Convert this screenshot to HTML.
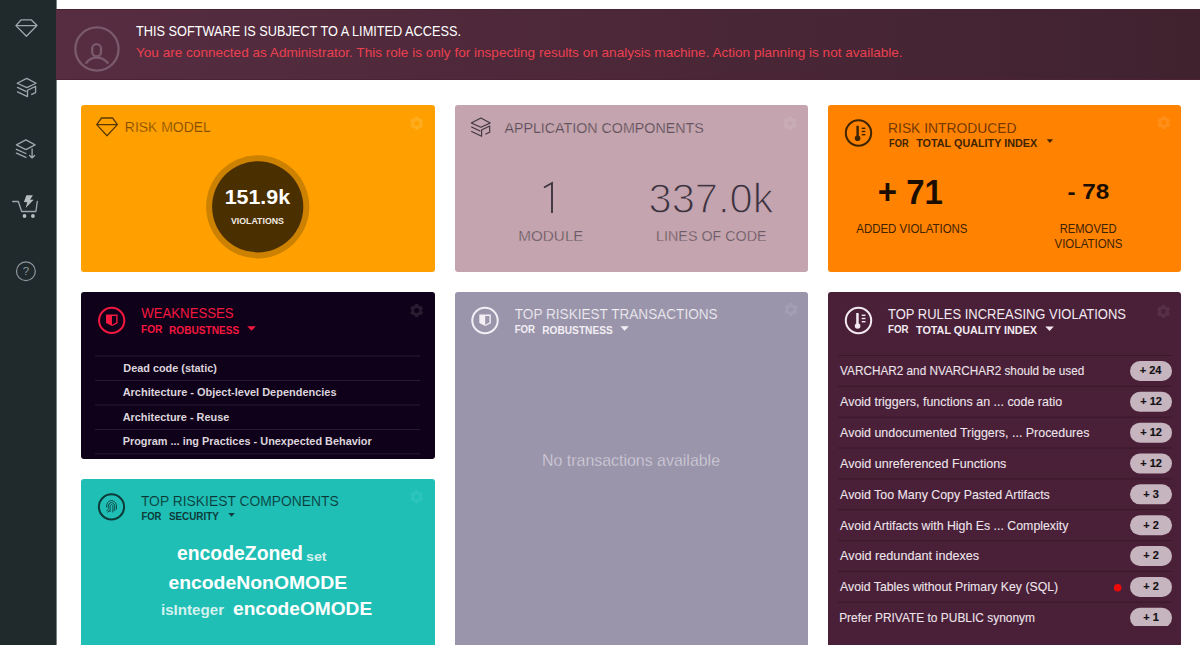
<!DOCTYPE html>
<html><head><meta charset="utf-8">
<style>
*{margin:0;padding:0;box-sizing:border-box}
html,body{width:1200px;height:645px;overflow:hidden;background:#fff;font-family:"Liberation Sans",sans-serif}
.abs{position:absolute}
#side{position:absolute;left:0;top:0;width:56px;height:645px;background:#20292c}
#sideline{position:absolute;left:56px;top:0;width:1px;height:645px;background:#7a8184}
#banner{position:absolute;left:56px;top:9px;width:1144px;height:71px;background:linear-gradient(90deg,#572d41,#40222f);border-top:1px solid #4a2334;border-bottom:1px solid #4a2334}
.card{position:absolute;border-radius:3px;overflow:hidden}
#ov{position:absolute;left:0;top:0}
</style></head><body>
<div id="side"></div>
<div id="sideline"></div>
<div id="banner"></div>

<div class="card" style="left:81px;top:105px;width:354px;height:167px;background:#ffa000"></div>
<div class="card" style="left:455px;top:105px;width:353px;height:167px;background:#c4a4ae"></div>
<div class="card" style="left:828px;top:105px;width:353px;height:167px;background:#ff8300"></div>
<div class="card" style="left:81px;top:292px;width:354px;height:167px;background:#10011a"></div>
<div class="card" style="left:81px;top:479px;width:354px;height:180px;background:#1fbfb5"></div>
<div class="card" style="left:455px;top:292px;width:353px;height:370px;background:#9a95ab"></div>
<div class="card" style="left:828px;top:292px;width:353px;height:370px;background:#4a2039"></div>

<svg id="ov" width="1200" height="645" viewBox="0 0 1200 645" font-family="Liberation Sans, sans-serif">
<defs>
  <clipPath id="rulesclip"><rect x="828" y="292" width="353" height="334"/></clipPath>
  <g id="gear">
    <path d="M-2.35 -4.41 L-1.51 -6.53 L1.51 -6.53 L2.35 -4.41 L2.65 -4.24 L4.90 -4.57 L6.41 -1.96 L5.00 -0.17 L5.00 0.17 L6.41 1.96 L4.90 4.57 L2.65 4.24 L2.35 4.41 L1.51 6.53 L-1.51 6.53 L-2.35 4.41 L-2.65 4.24 L-4.90 4.57 L-6.41 1.96 L-5.00 0.17 L-5.00 -0.17 L-6.41 -1.96 L-4.90 -4.57 L-2.65 -4.24 Z M0 -2.5 A2.5 2.5 0 1 0 0 2.5 A2.5 2.5 0 1 0 0 -2.5 Z" fill-rule="evenodd"/>
  </g>
</defs>

<!-- sidebar icons -->
<g fill="none" stroke="#9aa7ad" stroke-width="1.35" stroke-linejoin="round" stroke-linecap="round">
  <path d="M21.2 19.8 H31.2 L37 25.6 L26.4 36.3 L15.9 25.6 Z M15.9 25.6 H37"/>
  <path d="M26.80 78.40 L36.10 83.25 L26.80 87.65 L17.20 83.25 Z M17.50 87.45 L25.90 91.45 M17.50 91.85 L27.50 96.55 V90.25 L35.60 86.35 V92.55 L31.70 94.45"/>
  <path d="M25.9 139.8 L35.1 144.8 L25.9 149.6 L16.4 144.8 Z M16.4 149.3 L25.9 153.5 M16.4 153.2 L25.9 157.4 M32.1 149 L32.1 157.9 M29.6 155.4 L32.1 157.9 L34.6 155.4"/>
  <path d="M12.7 201.5 H18.3 L21.7 211.5 H35.9 L37.3 201.5"/>
  <circle cx="25.9" cy="271.3" r="9.4" stroke="#8d999f" stroke-width="1.2"/>
</g>
<g fill="#b5bdc1">
  <circle cx="24.5" cy="216" r="1.9"/>
  <circle cx="32.9" cy="216" r="1.9"/>
  <path d="M26.4 195.3 L32.9 195.3 L30.1 199.8 L33.7 199.8 L25.6 207.9 L27.3 202.3 L23.9 202 Z"/>
</g>
<text x="22.7" y="275.4" font-size="11.5" fill="#8d999f">?</text>

<!-- banner icon -->
<g fill="none" stroke="#7b5a6c" stroke-width="2.3">
  <circle cx="96.95" cy="49" r="21.6"/>
  <rect x="92.2" y="44.2" width="8.8" height="12.2" rx="4.4"/>
  <path d="M86.2 62.8 C88.5 59.5 92.5 57.6 96.8 57.6 C101.1 57.6 105.1 59.5 107.6 62.8" stroke-linecap="round"/>
</g>

<!-- card1 -->
<path d="M101.5 118 H112.6 L117.4 124.6 L107 135.7 L96.7 124.6 Z M96.7 124.6 H117.4" fill="none" stroke="#5a3a00" stroke-width="1.3" stroke-linejoin="round"/>
<circle cx="257.7" cy="206.8" r="51.6" fill="#cc8100"/>
<circle cx="257.7" cy="206.8" r="45.6" fill="#4a2f00"/>
<use href="#gear" x="416.7" y="123.3" fill="#ffad1f"/>

<!-- card2 -->
<g fill="none" stroke="#3e3641" stroke-width="1.15" stroke-linejoin="round" stroke-linecap="round">
  <path d="M480.9 118.05 L490.2 122.9 L480.9 127.3 L471.3 122.9 Z M471.6 127.1 L480 131.1 M471.6 131.5 L481.6 136.2 V129.9 L489.7 126 V132.2 L485.8 134.1"/>
</g>
<path d="M544 187.5 L552 183 V213" fill="none" stroke="#3e3641" stroke-width="1.9" stroke-linejoin="miter"/>
<use href="#gear" x="790" y="123.3" fill="#c9adb6"/>

<!-- card3 -->
<circle cx="858.5" cy="133" r="12.7" fill="none" stroke="#3f2400" stroke-width="2"/>
<g fill="#3f2400">
  <rect x="856.4" y="125.8" width="2.4" height="11.5"/>
  <circle cx="857.6" cy="138.2" r="2.8"/>
  <rect x="861.7" y="127.6" width="3.6" height="1.4"/>
  <rect x="861.7" y="130.8" width="3.6" height="1.4"/>
  <rect x="861.7" y="134" width="3.6" height="1.4"/>
  <path d="M1046.7 139.3 H1053.1 L1049.9 142.9 Z"/>
</g>
<use href="#gear" x="1163.8" y="122.6" fill="#ff8e1a"/>

<!-- weaknesses -->
<circle cx="111.7" cy="320.4" r="12.6" fill="none" stroke="#f2183f" stroke-width="2"/>
<path d="M106 314.5 H112 V326 L106 323 Z" fill="#f2183f"/>
<path d="M112 315.2 H116.9 V322.8 L112 325.5" fill="none" stroke="#f2183f" stroke-width="1.4"/>
<path d="M247.2 326.3 H255.9 L251.55 330.8 Z" fill="#f2183f"/>
<use href="#gear" x="416.6" y="310.5" fill="#2a1b30"/>
<g fill="#2a1a2f">
  <rect x="95" y="355.5" width="325" height="1"/>
  <rect x="95" y="380" width="325" height="1"/>
  <rect x="95" y="404.5" width="325" height="1"/>
  <rect x="95" y="429" width="325" height="1"/>
  <rect x="95" y="453.3" width="325" height="1"/>
</g>

<!-- teal -->
<circle cx="111.5" cy="506.9" r="12.6" fill="none" stroke="#0d3b3a" stroke-width="2"/>
<g fill="none" stroke="#0d3b3a" stroke-width="0.9" stroke-linecap="round">
  <path d="M106.5 507 C106.5 503 108.5 500.6 111.5 500.6 C114.5 500.6 116.5 503 116.5 507 V509"/>
  <path d="M108.3 508 V506.5 C108.3 504.3 109.6 502.6 111.5 502.6 C113.4 502.6 114.7 504.3 114.7 506.5 V510.5"/>
  <path d="M110.1 511.5 V506.5 C110.1 505.4 110.7 504.6 111.5 504.6 C112.3 504.6 112.9 505.4 112.9 506.5 V512"/>
  <path d="M106.8 510.5 L108.3 509.5 M107.5 512.2 L109.5 510.8"/>
</g>
<use href="#gear" x="416.7" y="496.7" fill="#2cc4bb"/>
<path d="M228.3 513 H234.8 L231.55 516.7 Z" fill="#0d3b3a"/>

<!-- transactions -->
<circle cx="485" cy="320.5" r="12.7" fill="none" stroke="#f3eff5" stroke-width="2"/>
<path d="M479.3 314.6 H485.2 V326 L479.3 323 Z" fill="#f3eff5"/>
<path d="M485.2 315.3 H490.1 V322.8 L485.2 325.5" fill="none" stroke="#f3eff5" stroke-width="1.4"/>
<path d="M620.4 326.3 H628.8 L624.6 330.7 Z" fill="#f3eff5"/>
<use href="#gear" x="790.9" y="309.4" fill="#a39eb3"/>

<!-- rules -->
<circle cx="858.5" cy="320.5" r="12.7" fill="none" stroke="#f2eaf0" stroke-width="2"/>
<g fill="#f2eaf0">
  <rect x="856.2" y="313" width="2.5" height="11.5"/>
  <circle cx="857.6" cy="326" r="2.8"/>
  <rect x="861.7" y="314.6" width="3.8" height="1.4"/>
  <rect x="861.7" y="317.8" width="3.8" height="1.4"/>
  <rect x="861.7" y="321" width="3.8" height="1.4"/>
  <path d="M1045.3 326.6 H1053.8 L1049.55 331 Z"/>
</g>
<use href="#gear" x="1163.5" y="311.5" fill="#573048"/>
<g clip-path="url(#rulesclip)">
<g fill="#3b1729">
  <rect x="838" y="355.00" width="334" height="1"/>
  <rect x="838" y="385.84" width="334" height="1"/>
  <rect x="838" y="416.68" width="334" height="1"/>
  <rect x="838" y="447.52" width="334" height="1"/>
  <rect x="838" y="478.36" width="334" height="1"/>
  <rect x="838" y="509.20" width="334" height="1"/>
  <rect x="838" y="540.04" width="334" height="1"/>
  <rect x="838" y="570.88" width="334" height="1"/>
  <rect x="838" y="601.72" width="334" height="1"/>
</g>
<circle cx="1117.7" cy="587.7" r="3.8" fill="#ee0a0a"/>
<rect x="1130" y="361.00" width="42" height="20" rx="10" fill="#c6b4be"/>
<text x="1139.70" y="374.40" font-size="11" font-weight="700" fill="#121012" stroke="#121012" stroke-width="0.15">+ 24</text>
<rect x="1130" y="391.84" width="42" height="20" rx="10" fill="#c6b4be"/>
<text x="1140.20" y="405.24" font-size="11" font-weight="700" fill="#121012" stroke="#121012" stroke-width="0.15">+ 12</text>
<rect x="1130" y="422.68" width="42" height="20" rx="10" fill="#c6b4be"/>
<text x="1140.20" y="436.08" font-size="11" font-weight="700" fill="#121012" stroke="#121012" stroke-width="0.15">+ 12</text>
<rect x="1130" y="453.52" width="42" height="20" rx="10" fill="#c6b4be"/>
<text x="1140.20" y="466.92" font-size="11" font-weight="700" fill="#121012" stroke="#121012" stroke-width="0.15">+ 12</text>
<rect x="1130" y="484.36" width="42" height="20" rx="10" fill="#c6b4be"/>
<text x="1143.26" y="497.76" font-size="11" font-weight="700" fill="#121012" stroke="#121012" stroke-width="0.15">+ 3</text>
<rect x="1130" y="515.20" width="42" height="20" rx="10" fill="#c6b4be"/>
<text x="1143.26" y="528.60" font-size="11" font-weight="700" fill="#121012" stroke="#121012" stroke-width="0.15">+ 2</text>
<rect x="1130" y="546.04" width="42" height="20" rx="10" fill="#c6b4be"/>
<text x="1143.26" y="559.44" font-size="11" font-weight="700" fill="#121012" stroke="#121012" stroke-width="0.15">+ 2</text>
<rect x="1130" y="576.88" width="42" height="20" rx="10" fill="#c6b4be"/>
<text x="1143.26" y="590.28" font-size="11" font-weight="700" fill="#121012" stroke="#121012" stroke-width="0.15">+ 2</text>
<rect x="1130" y="607.72" width="42" height="20" rx="10" fill="#c6b4be"/>
<text x="1143.26" y="621.12" font-size="11" font-weight="700" fill="#121012" stroke="#121012" stroke-width="0.15">+ 1</text>
</g>

<text x="136.00" y="35.50" font-size="15" font-weight="400" fill="#ffffff" textLength="324.98" lengthAdjust="spacingAndGlyphs">THIS SOFTWARE IS SUBJECT TO A LIMITED ACCESS.</text>
<text x="136.00" y="57.30" font-size="12.9" font-weight="400" fill="#ea4050" textLength="766.61" lengthAdjust="spacingAndGlyphs">You are connected as Administrator. This role is only for inspecting results on analysis machine. Action planning is not available.</text>
<text x="124.84" y="132.40" font-size="14.5" font-weight="400" fill="#4a2f00" stroke="#ffa000" stroke-width="0.45" textLength="86.02" lengthAdjust="spacingAndGlyphs">RISK MODEL</text>
<text x="224.67" y="203.90" font-size="20.8" font-weight="700" fill="#ffffff" textLength="65.48" lengthAdjust="spacingAndGlyphs">151.9k</text>
<text x="231.00" y="223.80" font-size="8.8" font-weight="700" fill="#f2ece4" textLength="52.87" lengthAdjust="spacingAndGlyphs">VIOLATIONS</text>
<text x="504.40" y="132.60" font-size="14.5" font-weight="400" fill="#3a3240" stroke="#c4a4ae" stroke-width="0.45" textLength="199.36" lengthAdjust="spacingAndGlyphs">APPLICATION COMPONENTS</text>
<text x="648.51" y="213.30" font-size="42.2" font-weight="400" fill="#3a3240" stroke="#c4a4ae" stroke-width="1.3" textLength="125.09" lengthAdjust="spacingAndGlyphs">337.0k</text>
<text x="518.32" y="240.60" font-size="15.5" font-weight="400" fill="#4a404b" stroke="#c4a4ae" stroke-width="0.5" textLength="65.22" lengthAdjust="spacingAndGlyphs">MODULE</text>
<text x="656.08" y="240.60" font-size="15.5" font-weight="400" fill="#4a404b" stroke="#c4a4ae" stroke-width="0.5" textLength="110.49" lengthAdjust="spacingAndGlyphs">LINES OF CODE</text>
<text x="888.05" y="132.50" font-size="14.5" font-weight="400" fill="#3a2000" stroke="#ff8300" stroke-width="0.3" textLength="128.40" lengthAdjust="spacingAndGlyphs">RISK INTRODUCED</text>
<text x="889.00" y="146.50" font-size="10.6" font-weight="700" fill="#3f2400" textLength="19.59" lengthAdjust="spacingAndGlyphs">FOR</text>
<text x="916.20" y="146.70" font-size="10.6" font-weight="700" fill="#3f2400" textLength="121.07" lengthAdjust="spacingAndGlyphs">TOTAL QUALITY INDEX</text>
<text x="877.81" y="203.75" font-size="34.9" font-weight="700" fill="#1b0e00" textLength="65.08" lengthAdjust="spacingAndGlyphs">+ 71</text>
<text x="1067.50" y="199.25" font-size="22.7" font-weight="700" fill="#1b0e00" textLength="41.91" lengthAdjust="spacingAndGlyphs">- 78</text>
<text x="856.25" y="232.50" font-size="12.9" font-weight="400" fill="#3f2200" textLength="111.28" lengthAdjust="spacingAndGlyphs">ADDED VIOLATIONS</text>
<text x="1059.63" y="232.50" font-size="12.9" font-weight="400" fill="#3f2200" textLength="56.89" lengthAdjust="spacingAndGlyphs">REMOVED</text>
<text x="1054.50" y="248.25" font-size="12.9" font-weight="400" fill="#3f2200" textLength="68.03" lengthAdjust="spacingAndGlyphs">VIOLATIONS</text>
<text x="141.30" y="318.30" font-size="14.0" font-weight="400" fill="#f2183f" textLength="92.32" lengthAdjust="spacingAndGlyphs">WEAKNESSES</text>
<text x="141.00" y="333.00" font-size="11" font-weight="700" fill="#f2183f" textLength="21.35" lengthAdjust="spacingAndGlyphs">FOR</text>
<text x="169.00" y="333.90" font-size="10.6" font-weight="700" fill="#f2183f" textLength="70.16" lengthAdjust="spacingAndGlyphs">ROBUSTNESS</text>
<text x="123.30" y="372.00" font-size="10.5" font-weight="700" fill="#dcd5dc" textLength="93.61" lengthAdjust="spacingAndGlyphs">Dead code (static)</text>
<text x="122.70" y="396.40" font-size="10.5" font-weight="700" fill="#dcd5dc" textLength="213.83" lengthAdjust="spacingAndGlyphs">Architecture - Object-level Dependencies</text>
<text x="122.70" y="420.80" font-size="10.5" font-weight="700" fill="#dcd5dc" textLength="106.63" lengthAdjust="spacingAndGlyphs">Architecture - Reuse</text>
<text x="122.70" y="445.20" font-size="10.5" font-weight="700" fill="#dcd5dc" textLength="249.09" lengthAdjust="spacingAndGlyphs">Program ... ing Practices - Unexpected Behavior</text>
<text x="140.90" y="506.20" font-size="14.5" font-weight="400" fill="#0a3332" stroke="#1fbfb5" stroke-width="0.2" textLength="197.84" lengthAdjust="spacingAndGlyphs">TOP RISKIEST COMPONENTS</text>
<text x="141.40" y="520.20" font-size="10.6" font-weight="700" fill="#0d3b3a" textLength="20.09" lengthAdjust="spacingAndGlyphs">FOR</text>
<text x="168.90" y="520.20" font-size="10.6" font-weight="700" fill="#0d3b3a" textLength="49.96" lengthAdjust="spacingAndGlyphs">SECURITY</text>
<text x="177.00" y="560.00" font-size="19.5" font-weight="700" fill="#ffffff" textLength="125.91" lengthAdjust="spacingAndGlyphs">encodeZoned</text>
<text x="306.00" y="561.00" font-size="13.5" font-weight="700" fill="#d4f1ee" textLength="20.47" lengthAdjust="spacingAndGlyphs">set</text>
<text x="168.40" y="589.00" font-size="18.2" font-weight="700" fill="#ffffff" textLength="178.74" lengthAdjust="spacingAndGlyphs">encodeNonOMODE</text>
<text x="160.99" y="615.00" font-size="15.0" font-weight="700" fill="#d4f1ee" textLength="63.15" lengthAdjust="spacingAndGlyphs">isInteger</text>
<text x="233.00" y="615.00" font-size="18.2" font-weight="700" fill="#ffffff" textLength="139.14" lengthAdjust="spacingAndGlyphs">encodeOMODE</text>
<text x="514.80" y="319.00" font-size="14.7" font-weight="400" fill="#f5f2f7" stroke="#9a95ab" stroke-width="0.2" textLength="202.81" lengthAdjust="spacingAndGlyphs">TOP RISKIEST TRANSACTIONS</text>
<text x="514.70" y="332.70" font-size="10.5" font-weight="700" fill="#f3eff5" textLength="20.42" lengthAdjust="spacingAndGlyphs">FOR</text>
<text x="542.30" y="333.90" font-size="10.6" font-weight="700" fill="#f3eff5" textLength="70.36" lengthAdjust="spacingAndGlyphs">ROBUSTNESS</text>
<text x="542.02" y="465.80" font-size="16.2" font-weight="400" fill="#d6d1dd" stroke="#9a95ab" stroke-width="0.3" textLength="177.99" lengthAdjust="spacingAndGlyphs">No transactions available</text>
<text x="888.00" y="319.00" font-size="15.0" font-weight="400" fill="#f2eaf0" textLength="238.00" lengthAdjust="spacingAndGlyphs">TOP RULES INCREASING VIOLATIONS</text>
<text x="888.10" y="332.50" font-size="10.3" font-weight="700" fill="#f2eaf0" textLength="20.57" lengthAdjust="spacingAndGlyphs">FOR</text>
<text x="916.00" y="333.50" font-size="10.3" font-weight="700" fill="#f2eaf0" textLength="121.06" lengthAdjust="spacingAndGlyphs">TOTAL QUALITY INDEX</text>
<text x="840.10" y="375.30" font-size="12.4" font-weight="400" fill="#eee5eb" stroke="#eee5eb" stroke-width="0.08" textLength="244.20" lengthAdjust="spacingAndGlyphs">VARCHAR2 and NVARCHAR2 should be used</text>
<text x="840.10" y="406.14" font-size="12.4" font-weight="400" fill="#eee5eb" stroke="#eee5eb" stroke-width="0.08" textLength="221.99" lengthAdjust="spacingAndGlyphs">Avoid triggers, functions an ... code ratio</text>
<text x="840.10" y="436.98" font-size="12.4" font-weight="400" fill="#eee5eb" stroke="#eee5eb" stroke-width="0.08" textLength="249.30" lengthAdjust="spacingAndGlyphs">Avoid undocumented Triggers, ... Procedures</text>
<text x="840.10" y="467.82" font-size="12.4" font-weight="400" fill="#eee5eb" stroke="#eee5eb" stroke-width="0.08" textLength="166.30" lengthAdjust="spacingAndGlyphs">Avoid unreferenced Functions</text>
<text x="840.10" y="498.66" font-size="12.4" font-weight="400" fill="#eee5eb" stroke="#eee5eb" stroke-width="0.08" textLength="209.69" lengthAdjust="spacingAndGlyphs">Avoid Too Many Copy Pasted Artifacts</text>
<text x="840.10" y="529.50" font-size="12.4" font-weight="400" fill="#eee5eb" stroke="#eee5eb" stroke-width="0.08" textLength="228.30" lengthAdjust="spacingAndGlyphs">Avoid Artifacts with High Es ... Complexity</text>
<text x="840.10" y="560.34" font-size="12.4" font-weight="400" fill="#eee5eb" stroke="#eee5eb" stroke-width="0.08" textLength="139.10" lengthAdjust="spacingAndGlyphs">Avoid redundant indexes</text>
<text x="840.10" y="591.18" font-size="12.4" font-weight="400" fill="#eee5eb" stroke="#eee5eb" stroke-width="0.08" textLength="218.13" lengthAdjust="spacingAndGlyphs">Avoid Tables without Primary Key (SQL)</text>
<text x="839.14" y="622.02" font-size="12.4" font-weight="400" fill="#eee5eb" stroke="#eee5eb" stroke-width="0.08" textLength="195.87" lengthAdjust="spacingAndGlyphs">Prefer PRIVATE to PUBLIC synonym</text>
</svg>
</body></html>
